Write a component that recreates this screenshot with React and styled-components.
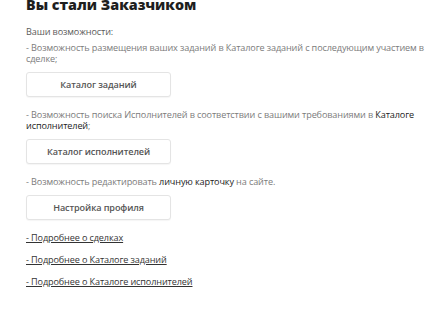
import React from "react";
import styled, { createGlobalStyle } from "styled-components";

const Global = createGlobalStyle`
  html, body { margin: 0; padding: 0; background: #ffffff; }
  body { font-family: "Open Sans", "Noto Sans", sans-serif; overflow: hidden; }
`;

const Page = styled.main`
  padding: 0 4px 0 26px;
  display: flex;
  flex-direction: column;
`;

const Title = styled.h1`
  margin: -4px 0 12px;
  font-size: 14.3px;
  line-height: 18px;
  font-weight: 800;
  color: #1e1e1e;
`;

const Text = styled.p`
  margin: 0 0 ${(p) => p.$gap ?? 8}px;
  font-size: 9.1px;
  letter-spacing: -0.12px;
  line-height: 11px;
  color: ${(p) => (p.$dark ? "#5a5a5a" : "#7b7b7b")};
`;

const Strong = styled.span`
  color: #222;
`;

const Section = styled.section`
  display: flex;
  flex-direction: column;
  align-items: flex-start;
  margin-bottom: 12px;
`;

const Button = styled.button`
  width: 145px;
  height: 25px;
  box-sizing: border-box;
  border: 1px solid #e4e4e4;
  border-radius: 3px;
  background: #fff;
  box-shadow: 0 1px 1px rgba(0, 0, 0, 0.04);
  font-family: inherit;
  font-size: 9.1px;
  letter-spacing: -0.1px;
  font-weight: 600;
  color: #555;
  padding: 0;
  cursor: pointer;
`;

const Links = styled.nav`
  display: flex;
  flex-direction: column;
  align-items: flex-start;
  gap: 11px;
`;

const Link = styled.a`
  font-size: 9.1px;
  letter-spacing: -0.12px;
  line-height: 11px;
  color: #333;
  text-decoration: underline;
  text-underline-offset: 1px;
`;

export default function App() {
  return (
    <>
      <Global />
      <Page>
        <Title>Вы стали Заказчиком</Title>
        <Text $dark $gap={5}>Ваши возможности:</Text>
        <Section>
          <Text>
            - Возможность размещения ваших заданий в Каталоге заданий с последующим участием в сделке;
          </Text>
          <Button>Каталог заданий</Button>
        </Section>
        <Section>
          <Text>
            - Возможность поиска Исполнителей в соответствии с вашими требованиями в{" "}
            <Strong>Каталоге исполнителей</Strong>;
          </Text>
          <Button>Каталог исполнителей</Button>
        </Section>
        <Section>
          <Text>
            - Возможность редактировать <Strong>личную карточку</Strong> на сайте.
          </Text>
          <Button>Настройка профиля</Button>
        </Section>
        <Links>
          <Link href="#">- Подробнее о сделках</Link>
          <Link href="#">- Подробнее о Каталоге заданий</Link>
          <Link href="#">- Подробнее о Каталоге исполнителей</Link>
        </Links>
      </Page>
    </>
  );
}
